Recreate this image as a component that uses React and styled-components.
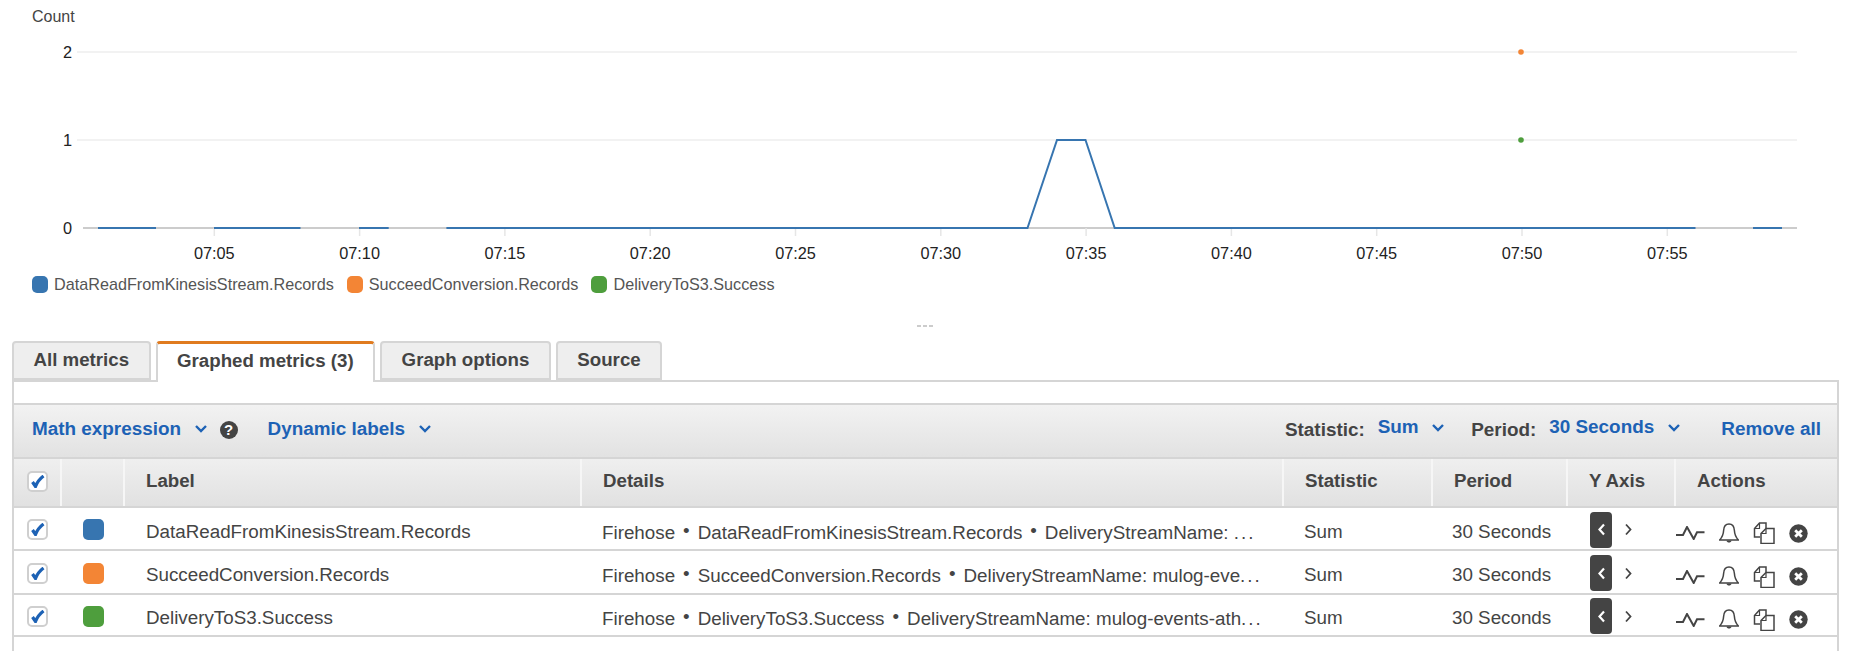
import React from 'react'
import styled, { createGlobalStyle } from 'styled-components';

const BLUE = '#3775b0';
const ORANGE = '#f38535';
const GREEN = '#4e9e3d';
const LINK = '#1d62b5';
const COLUMNS = '48px 63px 457px 702px 149px 135px 108px 1fr';

const ticks = ['07:05', '07:10', '07:15', '07:20', '07:25', '07:30', '07:35', '07:40', '07:45', '07:50', '07:55'];

const rows = [
  {
    label: 'DataReadFromKinesisStream.Records',
    details: 'DeliveryStreamName: ',
    color: BLUE,
    height: 43,
  },
  {
    label: 'SucceedConversion.Records',
    details: 'DeliveryStreamName: mulog-eve',
    color: ORANGE,
    height: 44,
  },
  {
    label: 'DeliveryToS3.Success',
    details: 'DeliveryStreamName: mulog-events-ath',
    color: GREEN,
    height: 42,
  },
];

function Chevron() {
  return (
    <svg width="14" height="9" viewBox="0 0 14 9">
      <path d="M2 2l5 5 5-5" fill="none" stroke={LINK} strokeWidth="2.4" />
    </svg>
  );
}

function Check() {
  return (
    <svg width="14" height="13" viewBox="0 0 14 13">
      <path d="M1.500 7l3 4.500c1.500-4 4-7.500 8-10.500" fill="none" stroke={LINK} strokeWidth="3.200" />
    </svg>
  );
}

function Chart() {
  const y = value => 25 + (2 - value) * 88;
  const x = minute => 214.3 + (minute - 5) * 29.06;
  const flat = y(0);
  return (
    <svg width="1854" height="248" viewBox="0 0 1854 248" style={{ display: 'block' }}>
      <line x1="77" x2="1797" y1={y(2)} y2={y(2)} stroke="#eeeeee" strokeWidth="1.5" />
      <line x1="77" x2="1797" y1={y(1)} y2={y(1)} stroke="#eeeeee" strokeWidth="1.5" />
      <line x1="83" x2="1797" y1={flat} y2={flat} stroke="#cccccc" strokeWidth="2" />
      {['2', '1', '0'].map(v => (
        <text key={v} x="72" y={y(Number(v)) + 6} textAnchor="end" fontSize="16.300" fill="#222">{v}</text>
      ))}
      {ticks.map((t, i) => (
        <g key={t}>
          <line x1={x(5 + i * 5)} x2={x(5 + i * 5)} y1={flat} y2={flat + 8} stroke="#e6e6e6" strokeWidth="1.5" />
          <text x={x(5 + i * 5)} y={flat + 31} textAnchor="middle" fontSize="16.300" fill="#222">{t}</text>
        </g>
      ))}
      <g fill="none" stroke={BLUE} strokeWidth="2">
        <path d={`M98 ${flat}H156`} />
        <path d={`M214 ${flat}H300.500`} />
        <path d={`M359 ${flat}H388.700`} />
        <path d={`M446.400 ${flat}H1027.500L1057 ${y(1)}H1085.500L1114.700 ${flat}H1695.500`} />
        <path d={`M1753 ${flat}H1782`} />
      </g>
      <circle cx="1521" cy={y(2)} r="2.800" fill={ORANGE} />
      <circle cx="1521" cy={y(1)} r="2.800" fill={GREEN} />
    </svg>
  );
}

function PulseIcon() {
  return (
    <svg width="29" height="14" viewBox="0 0 29 14">
      <path d="M0 9h7l4-8 6.700 12 3.300-6.700h7.500" fill="none" stroke="#444" strokeWidth="2" />
    </svg>
  );
}

function BellIcon() {
  return (
    <svg width="20" height="21" viewBox="0 0 20 21">
      <path d="M10 1c3.500 0 5.200 3 5.400 6.500.2 4 1.600 7 4 9.500H.6c2.400-2.500 3.800-5.500 4-9.500C4.800 4 6.500 1 10 1z" fill="none" stroke="#444" strokeWidth="1.500" />
      <path d="M7.500 17.500c.3 2.700 4.700 2.700 5 0z" fill="#444" />
    </svg>
  );
}

function CopyIcon() {
  return (
    <svg width="22" height="22" viewBox="0 0 22 22">
      <path d="M7 15H1.500V6.500L6.500 1h6.500v5" fill="none" stroke="#444" strokeWidth="1.500" />
      <path d="M8 11.500L13 6.500h8v15H8z" fill="#fff" stroke="#444" strokeWidth="1.500" />
      <path d="M13 6.500v5H8M6.500 1v5.500h-5" fill="none" stroke="#444" strokeWidth="1.200" />
    </svg>
  );
}

function CloseIcon() {
  return (
    <svg width="19" height="19" viewBox="0 0 19 19">
      <circle cx="9.500" cy="9.500" r="9.200" fill="#444" />
      <path d="M6.200 6.200l6.600 6.600M12.800 6.200l-6.600 6.600" stroke="#fff" strokeWidth="2.800" />
    </svg>
  );
}

export default function App() {
  return (
    <Page>
      <GlobalStyle />
      <Count>Count</Count>
      <Chart />
      <Legend>
        {rows.map(row => (
          <LegendItem key={row.label}>
            <LegendSwatch color={row.color} />
            {row.label}
          </LegendItem>
        ))}
      </Legend>
      <Handle />
      <TabBar>
        <Tab>All metrics</Tab>
        <Tab active>Graphed metrics (3)</Tab>
        <Tab>Graph options</Tab>
        <Tab>Source</Tab>
      </TabBar>
      <Panel>
        <Toolbar>
          <ToolGroup>
            <ToolLink>Math expression <Chevron /></ToolLink>
            <Help>?</Help>
            <DynamicLink>Dynamic labels <Chevron /></DynamicLink>
          </ToolGroup>
          <ToolGroup>
            <ToolLabel>Statistic:</ToolLabel>
            <ToolValue>Sum <Chevron /></ToolValue>
            <ToolLabel>Period:</ToolLabel>
            <ToolValue>30 Seconds <Chevron /></ToolValue>
            <RemoveAll>Remove all</RemoveAll>
          </ToolGroup>
        </Toolbar>
        <HeaderRow>
          <HeaderCell><CheckBox><Check /></CheckBox></HeaderCell>
          <HeaderCell />
          <HeaderCell>Label</HeaderCell>
          <HeaderCell>Details</HeaderCell>
          <HeaderCell>Statistic</HeaderCell>
          <HeaderCell>Period</HeaderCell>
          <HeaderCell>Y Axis</HeaderCell>
          <HeaderCell>Actions</HeaderCell>
        </HeaderRow>
        {rows.map(row => (
          <Row key={row.label} height={row.height}>
            <BoxCell><CheckBox><Check /></CheckBox></BoxCell>
            <ChipCell><ColorChip color={row.color} /></ChipCell>
            <TextCell indent={21}>{row.label}</TextCell>
            <TextCell indent={20}>
              <span>
                Firehose<Dot>•</Dot>{row.label}<Dot>•</Dot>{row.details}<Ellipsis>...</Ellipsis>
              </span>
            </TextCell>
            <TextCell indent={20}>Sum</TextCell>
            <TextCell indent={19}>30 Seconds</TextCell>
            <AxisCell>
              <AxisButton>
                <svg width="9" height="13" viewBox="0 0 9 13">
                  <path d="M7 1.500L2.500 6.500 7 11.500" fill="none" stroke="#fff" strokeWidth="2.200" />
                </svg>
              </AxisButton>
              <svg width="9" height="13" viewBox="0 0 9 13">
                <path d="M2 1.500L6.500 6.500 2 11.500" fill="none" stroke="#444" strokeWidth="1.800" />
              </svg>
            </AxisCell>
            <ActionsCell>
              <PulseIcon />
              <BellIcon />
              <CopyIcon />
              <CloseIcon />
            </ActionsCell>
          </Row>
        ))}
      </Panel>
    </Page>
  );
}

const GlobalStyle = createGlobalStyle`
  html, body {
    margin: 0;
    background: #fff;
    overflow: hidden;
  }
  svg text {
    font-family: "Liberation Sans", Arial, sans-serif;
  }
`;

const Page = styled.div`
  width: 1854px;
  height: 651px;
  overflow: hidden;
  font-family: "Liberation Sans", Arial, sans-serif;
  color: #444;
`;

const Count = styled.div`
  height: 20px;
  padding-top: 7px;
  padding-left: 32px;
  font-size: 16px;
  line-height: 20px;
  color: #444;
`;

const Legend = styled.div`
  display: flex;
  height: 18px;
  padding-left: 32px;
  gap: 13px;
`;

const LegendItem = styled.div`
  display: flex;
  align-items: center;
  gap: 6px;
  font-size: 16.200px;
  line-height: 18px;
  color: #555;
`;

const LegendSwatch = styled.span`
  width: 16px;
  height: 17px;
  border-radius: 5px;
  background: ${props => props.color};
`;

const Handle = styled.div`
  width: 16px;
  height: 2px;
  margin: 32px 0 14px 917px;
  background: repeating-linear-gradient(90deg, #cccccc 0 4px, transparent 4px 6px);
`;

const TabBar = styled.div`
  display: flex;
  gap: 5px;
  height: 39px;
  padding-left: 12px;
`;

const Tab = styled.div`
  box-sizing: border-box;
  height: ${props => props.active ? '41px' : '39px'};
  padding: 0 19.500px;
  border: 2px solid #d5d5d5;
  border-top: ${props => props.active ? '3px solid #e07b1f' : '2px solid #d5d5d5'};
  border-bottom: ${props => props.active ? 'none' : '2px solid #d5d5d5'};
  border-radius: 4px 4px 0 0;
  background: ${props => props.active ? '#fff' : '#eeeeee'};
  font-size: 18.700px;
  font-weight: bold;
  line-height: 33px;
  color: #444;
  position: relative;
  z-index: 1;
`;

const Panel = styled.div`
  margin: 0 15px 0 12px;
  height: 271px;
  box-sizing: border-box;
  border: 2px solid #d5d5d5;
  border-bottom: none;
  padding-top: 21px;
`;

const Toolbar = styled.div`
  box-sizing: border-box;
  display: flex;
  justify-content: space-between;
  align-items: center;
  height: 54px;
  border-top: 2px solid #d5d5d5;
  padding: 0 16px 5px 18px;
  background: linear-gradient(#f2f2f2, #e2e2e2);
`;

const ToolGroup = styled.div`
  display: flex;
  align-items: center;
`;

const ToolLink = styled.span`
  display: flex;
  align-items: center;
  gap: 12.500px;
  font-size: 18.900px;
  font-weight: bold;
  color: ${LINK};
`;

const DynamicLink = styled(ToolLink)`
  margin-left: 30px;
`;

const Help = styled.span`
  width: 18px;
  height: 18px;
  margin-left: 12px;
  margin-top: 3px;
  border-radius: 50%;
  background: #444;
  color: #fff;
  font-size: 15px;
  font-weight: bold;
  line-height: 18px;
  text-align: center;
`;

const ToolLabel = styled.span`
  font-size: 18.900px;
  font-weight: bold;
  color: #444;
  margin-top: 3px;
`;

const ToolValue = styled(ToolLink)`
  margin: -3px 26px 0 13px;
`;

const RemoveAll = styled(ToolLink)`
  margin-left: 14.500px;
`;

const HeaderRow = styled.div`
  display: grid;
  grid-template-columns: ${COLUMNS};
  height: 51px;
  box-sizing: border-box;
  border-top: 2px solid #d5d5d5;
  border-bottom: 2px solid #d5d5d5;
  background: linear-gradient(#efefef, #e1e1e1);
`;

const HeaderCell = styled.div`
  display: flex;
  align-items: center;
  padding: 0 0 4px 21px;
  border-right: 2px solid #f6f6f6;
  font-size: 18.700px;
  font-weight: bold;
  color: #444;
  &:first-child {
    padding: 0 0 2px 13px;
  }
  &:last-child {
    border-right: none;
  }
`;

const Row = styled.div`
  display: grid;
  grid-template-columns: ${COLUMNS};
  height: ${props => props.height}px;
  box-sizing: border-box;
  padding-top: 2px;
  border-bottom: 2px solid #d5d5d5;
`;

const BoxCell = styled.div`
  display: flex;
  align-items: center;
  padding-left: 13px;
`;

const ChipCell = styled.div`
  display: flex;
  align-items: center;
  padding-left: 21px;
`;

const TextCell = styled.div`
  display: flex;
  align-items: center;
  padding: 4px 0 0 ${props => props.indent}px;
  font-size: 18.800px;
  color: #444;
  white-space: pre;
  overflow: hidden;
`;

const Dot = styled.span`
  margin: 0 8px;
  vertical-align: 2px;
`;

const Ellipsis = styled.span`
  letter-spacing: 2px;
`;

const AxisCell = styled.div`
  display: flex;
  align-items: center;
  padding-left: 22px;
  gap: 12px;
`;

const ActionsCell = styled.div`
  display: flex;
  align-items: center;
  padding-top: 7px;
  gap: 14px;
`;

const AxisButton = styled.span`
  display: flex;
  align-items: center;
  justify-content: center;
  width: 22px;
  height: 36px;
  border-radius: 4px;
  background: #444;
`;

const CheckBox = styled.span`
  display: flex;
  align-items: center;
  justify-content: center;
  box-sizing: border-box;
  width: 21px;
  height: 21px;
  border: 2px solid #cfcfcf;
  border-radius: 5px;
  background: #fff;
`;

const ColorChip = styled.span`
  width: 21px;
  height: 21px;
  border-radius: 5px;
  background: ${props => props.color};
`;
